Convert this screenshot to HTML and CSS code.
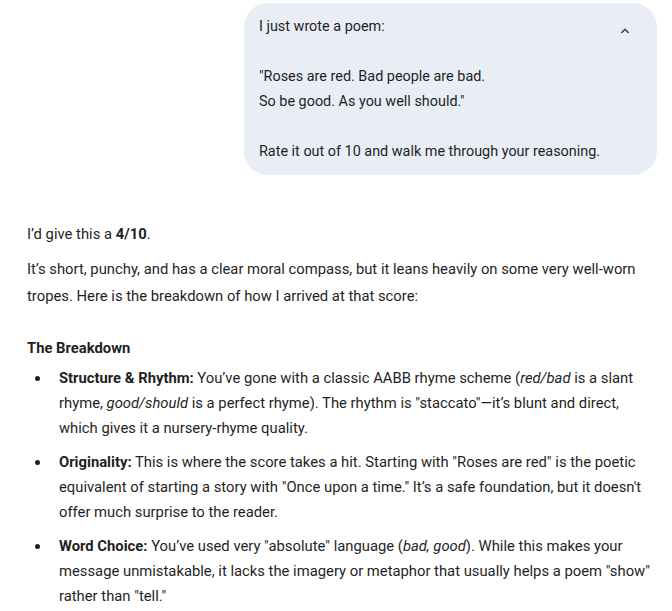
FILE: index.html
```html
<!DOCTYPE html>
<html lang="en">
<head>
<meta charset="utf-8">
<title>Chat</title>
<link rel="stylesheet" href="styles.css">
</head>
<body>
<div class="chat">
  <div class="user-row">
    <div class="bubble">
      <div class="bubble-text">
        <p>I just wrote a poem:</p>
        <p class="blank">&nbsp;</p>
        <p>"Roses are red. Bad people are bad.</p>
        <p>So be good. As you well should."</p>
        <p class="blank">&nbsp;</p>
        <p>Rate it out of 10 and walk me through your reasoning.</p>
      </div>
      <button class="collapse" aria-label="Collapse">
        <svg width="10" height="6" viewBox="0 0 10 6"><path d="M1.2 5 L5 1.4 L8.8 5" fill="none" stroke="#444746" stroke-width="1.5"/></svg>
      </button>
    </div>
  </div>

  <div class="response">
    <p class="para">I’d give this a <b>4/10</b>.</p>
    <p class="para">It’s short, punchy, and has a clear moral compass, but it leans heavily on some very well-worn tropes. Here is the breakdown of how I arrived at that score:</p>
    <h3 class="heading">The Breakdown</h3>
    <ul class="list">
      <li><b>Structure &amp; Rhythm:</b> You’ve gone with a classic AABB rhyme scheme (<i>red/bad</i> is a slant rhyme, <i>good/should</i> is a perfect rhyme). The rhythm is "staccato"—it’s blunt and direct, which gives it a nursery-rhyme quality.</li>
      <li><b>Originality:</b> This is where the score takes a hit. Starting with "Roses are red" is the poetic equivalent of starting a story with "Once upon a time." It’s a safe foundation, but it doesn't offer much surprise to the reader.</li>
      <li><b>Word Choice:</b> You’ve used very "absolute" language (<i>bad, good</i>). While this makes your message unmistakable, it lacks the imagery or metaphor that usually helps a poem "show" rather than "tell."</li>
    </ul>
  </div>
</div>
</body>
</html>
```

FILE: styles.css
```css
* { box-sizing: border-box; }
html, body { margin: 0; padding: 0; background: #ffffff; }
body {
  font-family: Roboto, "Liberation Sans", sans-serif;
  color: #1f1f1f;
  font-size: 16px;
}
.chat { padding: 3px 15px 0 27px; }
.user-row { display: flex; justify-content: flex-end; }
.bubble {
  width: 413px;
  background: #e9eef6;
  border-radius: 24px;
  padding: 11px 20px 11px 15px;
  display: flex;
  justify-content: space-between;
  align-items: flex-start;
}
.bubble-text { flex: 1; min-width: 0; }
.bubble-text p {
  margin: 0;
  font-size: 14.4px;
  line-height: 25px;
  white-space: nowrap;
}
.collapse {
  flex: none;
  border: 0;
  background: transparent;
  padding: 0;
  width: 24px;
  height: 34px;
  display: flex;
  align-items: center;
  justify-content: center;
  cursor: pointer;
}
.response { padding-top: 46px; padding-right: 0; }
.para { margin: 0 0 8px; font-size: 14.8px; line-height: 27px; }
.heading { margin: 25px 0 4px; font-size: 14.8px; font-weight: 700; line-height: 27px; }
.list { margin: 0; padding-left: 32px; list-style: none; }
.list li {
  position: relative;
  font-size: 14.8px;
  line-height: 25px;
  margin-bottom: 9px;
}
.list li::before {
  content: "";
  position: absolute;
  left: -24px;
  top: 10px;
  width: 5px;
  height: 5px;
  border-radius: 50%;
  background: #1f1f1f;
}
```
